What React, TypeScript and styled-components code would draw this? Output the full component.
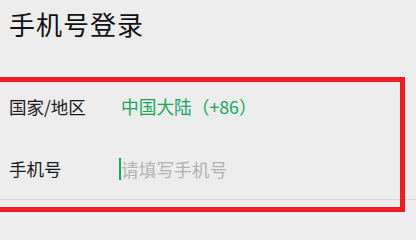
import { FC } from 'react'
import styled, { createGlobalStyle } from 'styled-components'

const GlobalStyle = createGlobalStyle`
  html, body {
    margin: 0;
    padding: 0;
    background: #ededed;
  }
  body {
    font-family: 'Noto Sans CJK SC', 'Noto Sans', sans-serif;
    overflow: hidden;
  }
`

const Page = styled.div`
  position: relative;
  width: 416px;
  height: 226px;
  background: #ededed;
  overflow: hidden;
`

const Header = styled.div`
  height: 74px;
  box-sizing: border-box;
  padding: 9px 9px 0;
`

const Title = styled.h1`
  margin: 0;
  font-size: 26px;
  font-weight: 400;
  line-height: 30px;
  color: #111;
  letter-spacing: 1px;
`

const Form = styled.div`
  display: flex;
  flex-direction: column;
`

const Row = styled.div<{ divider?: boolean; height: number }>`
  display: flex;
  align-items: center;
  height: ${({ height }) => height}px;
  padding-left: 9px;
  box-sizing: border-box;
  border-bottom: ${({ divider }) => (divider ? '1px solid #d9d9d9' : 'none')};
`

const Label = styled.span`
  width: 110px;
  flex-shrink: 0;
  font-size: 17.5px;
  color: #1a1a1a;
`

const Value = styled.span`
  padding-left: 2px;
  font-size: 17.7px;
  color: #13a85b;
`

const Field = styled.div`
  display: flex;
  align-items: center;
`

const Caret = styled.span`
  width: 2px;
  height: 22px;
  background: #07b35a;
`

const Placeholder = styled.span`
  font-size: 17.7px;
  color: #b3b3b3;
`

const Highlight = styled.div`
  position: absolute;
  top: 77px;
  left: -10px;
  width: 415px;
  height: 135px;
  box-sizing: border-box;
  border: 5px solid #ee1c25;
  pointer-events: none;
`

const App: FC = () => {
  return (
    <>
      <GlobalStyle />
      <Page>
        <Header>
          <Title>手机号登录</Title>
        </Header>
        <Form>
          <Row height={64}>
            <Label>国家/地区</Label>
            <Value>中国大陆（+86）</Value>
          </Row>
          <Row height={62} divider>
            <Label>手机号</Label>
            <Field>
              <Caret />
              <Placeholder>请填写手机号</Placeholder>
            </Field>
          </Row>
        </Form>
        <Highlight />
      </Page>
    </>
  )
}

export default App
